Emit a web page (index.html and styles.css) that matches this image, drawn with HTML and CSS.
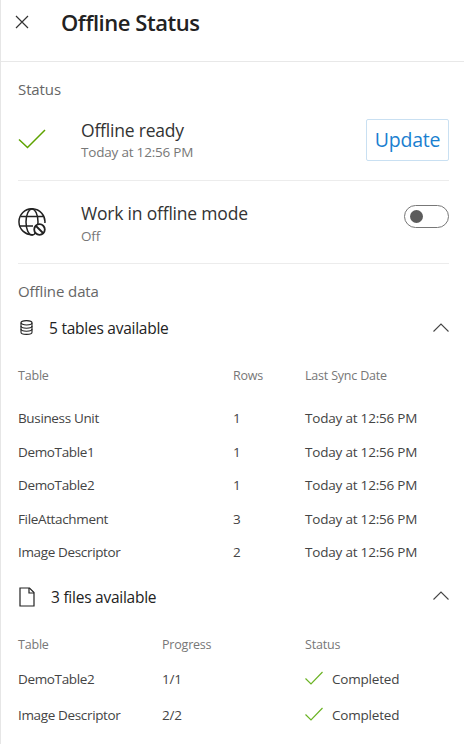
FILE: index.html
```html
<!DOCTYPE html>
<html lang="en">
<head>
    <meta charset="UTF-8">
    <meta name="viewport" content="width=device-width, initial-scale=1.0">
    <title>Offline Status</title>
    <link rel="stylesheet" href="styles.css">
</head>
<body>
    <div class="panel">
        <!-- Header -->
        <header class="header">
            <svg class="close-icon" width="14" height="14" viewBox="0 0 14 14"><path d="M1 1l12 12M13 1L1 13" fill="none" stroke="#333" stroke-width="1.2"/></svg>
            <h1>Offline Status</h1>
        </header>

        <main class="content">
            <h2 class="section-label status-label">Status</h2>

            <div class="status-row ready-row">
                <div class="row-icon">
                    <svg width="28" height="20" viewBox="0 0 28 20"><path d="M1 10.5l8.500 8L27 1" fill="none" stroke="#5ea300" stroke-width="1.500"/></svg>
                </div>
                <div class="row-text">
                    <div class="row-title">Offline ready</div>
                    <div class="row-sub">Today at 12:56 PM</div>
                </div>
                <button class="update-btn">Update</button>
            </div>

            <div class="status-row mode-row">
                <div class="row-icon">
                    <svg width="28" height="28" viewBox="0 0 28 28" fill="none" stroke="#222" stroke-width="1.500">
                        <path d="M15 26.700A13 13 0 1 1 26.900 15"/>
                        <ellipse cx="14" cy="14" rx="6" ry="13"/>
                        <path d="M2.500 8.500h23M1.500 18h13.500"/>
                        <circle cx="21.500" cy="21.500" r="5.300" fill="#fff" stroke-width="1.800"/>
                        <path d="M18 18l7 7" stroke-width="1.800"/>
                    </svg>
                </div>
                <div class="row-text">
                    <div class="row-title">Work in offline mode</div>
                    <div class="row-sub">Off</div>
                </div>
                <div class="toggle"><span class="toggle-knob"></span></div>
            </div>

            <h2 class="section-label data-label">Offline data</h2>

            <div class="group-head tables-head">
                <svg class="group-icon" width="13" height="15" viewBox="0 0 13 15" fill="none" stroke="#222" stroke-width="1.100">
                    <ellipse cx="6.500" cy="2.800" rx="5.500" ry="2.200"/>
                    <path d="M1 2.800v9.400c0 1.200 2.500 2.200 5.500 2.200s5.500-1 5.500-2.200V2.800"/>
                    <path d="M1 6c0 1.200 2.500 2.200 5.500 2.200S12 7.200 12 6M1 9.100c0 1.200 2.500 2.200 5.500 2.200s5.500-1 5.500-2.200"/>
                </svg>
                <span class="group-title">5 tables available</span>
                <svg class="chevron" width="16" height="9" viewBox="0 0 16 9"><path d="M.5 8.500L8 1l7.500 7.500" fill="none" stroke="#444" stroke-width="1.100"/></svg>
            </div>

            <div class="grid tables-grid">
                <div class="cell-head">Table</div><div class="cell-head">Rows</div><div class="cell-head">Last Sync Date</div>
                <div class="cell-name">Business Unit</div><div>1</div><div>Today at 12:56 PM</div>
                <div class="cell-name">DemoTable1</div><div>1</div><div>Today at 12:56 PM</div>
                <div class="cell-name">DemoTable2</div><div>1</div><div>Today at 12:56 PM</div>
                <div class="cell-name">FileAttachment</div><div>3</div><div>Today at 12:56 PM</div>
                <div class="cell-name">Image Descriptor</div><div>2</div><div>Today at 12:56 PM</div>
            </div>

            <div class="group-head files-head">
                <svg class="group-icon" width="16" height="20" viewBox="0 0 16 20" fill="none" stroke="#222" stroke-width="1.200">
                    <path d="M1 1h9.500L15 5.500V19H1z"/>
                    <path d="M10 1v5h5"/>
                </svg>
                <span class="group-title">3 files available</span>
                <svg class="chevron" width="16" height="9" viewBox="0 0 16 9"><path d="M.5 8.500L8 1l7.500 7.500" fill="none" stroke="#444" stroke-width="1.100"/></svg>
            </div>

            <div class="grid files-grid">
                <div class="cell-head">Table</div><div class="cell-head">Progress</div><div class="cell-head">Status</div>
                <div class="cell-name">DemoTable2</div><div>1/1</div>
                <div class="done"><svg width="18" height="14" viewBox="0 0 18 14"><path d="M.5 7.500l5.500 5.500L17.500 1" fill="none" stroke="#6bb324" stroke-width="1.200"/></svg>Completed</div>
                <div class="cell-name">Image Descriptor</div><div>2/2</div>
                <div class="done"><svg width="18" height="14" viewBox="0 0 18 14"><path d="M.5 7.500l5.500 5.500L17.500 1" fill="none" stroke="#6bb324" stroke-width="1.200"/></svg>Completed</div>
            </div>
        </main>
    </div>
</body>
</html>
```

FILE: styles.css
```css
/* Global Styles */
* { box-sizing: border-box; margin: 0; padding: 0; }
html, body { height: 100%; overflow: hidden; }
body {
    font-family: "Open Sans", "Noto Sans", sans-serif;
    background: #fff;
    color: #444;
}

.panel {
    height: 744px;
    border-left: 1px solid #e6e6e6;
}

.header {
    height: 62px;
    display: flex;
    align-items: center;
    padding-left: 14px;
    padding-bottom: 17px;
    border-bottom: 1px solid #e8e8e8;
}
.close-icon { margin-right: 32px; }
h1 { font-size: 22px; font-weight: 600; color: #222; letter-spacing: -.45px; }

.content { padding: 0 15px 0 17px; }

.section-label { font-size: 15px; font-weight: 400; color: #666; line-height: 20px; letter-spacing: -.1px; }
.status-label { padding-top: 17px; }
.data-label { padding-top: 17px; }

.status-row {
    height: 83px;
    display: flex;
    border-bottom: 1px solid #ececec;
}
.ready-row { height: 82px; padding-top: 9px; align-items: center; padding-bottom: 9px; }
.mode-row { padding-top: 20px; }

.row-icon { width: 63px; flex: none; }
.ready-row .row-icon { padding-top: 3px; }
.mode-row .row-icon { padding-top: 7px; }
.row-text { flex: 1; }
.row-title { font-size: 17.500px; color: #333; line-height: 24px; letter-spacing: -.2px; }
.row-sub { font-size: 13.500px; color: #777; line-height: 20px; letter-spacing: -.2px; }
.ready-row .row-title { margin-top: 1px; }
.mode-row .row-sub { margin-top: 1px; }

.update-btn {
    width: 83px;
    height: 42px;
    font: inherit;
    font-size: 19.500px;
    letter-spacing: -.2px;
    color: #1a7fd0;
    background: #fff;
    border: 1px solid #c9e0f2;
    border-radius: 2px;
}

.toggle {
    width: 45px;
    height: 23px;
    margin-top: 4px;
    padding: 4px 5px;
    border: 1px solid #777;
    border-radius: 12px;
}
.toggle-knob {
    display: block;
    width: 13px;
    height: 13px;
    border-radius: 50%;
    background: #5c5c5c;
}

.group-head { display: flex; align-items: center; }
.tables-head { height: 24px; margin-top: 15px; }
.files-head { height: 24px; margin-top: 9px; }
.group-title { flex: 1; font-size: 15.500px; color: #222; letter-spacing: -.25px; }
.tables-head .group-icon { margin: -1px 16px 0 2px; }
.files-head .group-icon { margin: 0 16px 0 1px; }
.chevron { margin-top: -2px; }

.grid { display: grid; font-size: 13.500px; color: #444; line-height: 20px; letter-spacing: -.2px; }
.cell-name { letter-spacing: -.35px; }
.cell-head { font-size: 12.500px; color: #777; letter-spacing: -.2px; }
.tables-grid {
    grid-template-columns: 215px 72px 1fr;
    grid-template-rows: 42px;
    grid-auto-rows: 33.500px;
    margin-top: 26px;
}
.files-grid {
    grid-template-columns: 144px 143px 1fr;
    grid-template-rows: 34px;
    grid-auto-rows: 36.500px;
    margin-top: 26px;
}
.done { display: flex; align-items: flex-start; }
.done svg { margin-right: 9px; margin-top: 2px; }
```
